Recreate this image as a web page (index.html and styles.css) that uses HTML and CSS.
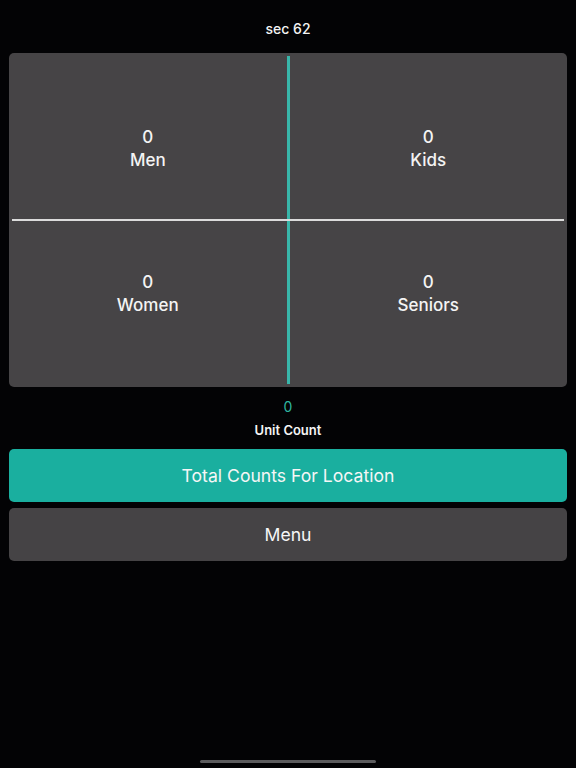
FILE: index.html
```html
<!DOCTYPE html>
<html>
<head>
<meta charset="utf-8">
<link rel="stylesheet" href="styles.css">
</head>
<body>
<div class="screen">
  <div class="title">sec 62</div>
  <div class="panel">
    <div class="grid">
      <div class="cell top left"><span class="num">0</span><span class="lbl">Men</span></div>
      <div class="vline"></div>
      <div class="cell top right"><span class="num">0</span><span class="lbl">Kids</span></div>
      <div class="hline"></div>
      <div class="cell bottom left"><span class="num">0</span><span class="lbl">Women</span></div>
      <div class="vline"></div>
      <div class="cell bottom right"><span class="num">0</span><span class="lbl">Seniors</span></div>
    </div>
  </div>
  <div class="unit">
    <span class="unit-num">0</span>
    <span class="unit-lbl">Unit Count</span>
  </div>
  <div class="btn teal">Total Counts For Location</div>
  <div class="btn gray">Menu</div>
</div>
<div class="home"></div>
</body>
</html>
```
FILE: styles.css
```css
html, body {
  margin: 0;
  padding: 0;
  background: #030305;
  height: 768px;
  overflow: hidden;
  font-family: Inter, "Liberation Sans", sans-serif;
  color: #f4f4f4;
}
.screen {
  padding: 0 9px;
  display: flex;
  flex-direction: column;
}
.title {
  height: 53px;
  display: flex;
  align-items: center;
  justify-content: center;
  font-size: 14px;
  font-weight: 500;
  padding-top: 3px;
  box-sizing: border-box;
}
.panel {
  background: #464446;
  border-radius: 5px;
  padding: 3px;
  height: 334px;
  box-sizing: border-box;
}
.grid {
  display: grid;
  grid-template-columns: 1fr 3px 1fr;
  grid-template-rows: 163px 2px 163px;
  height: 100%;
}
.cell {
  display: flex;
  flex-direction: column;
  align-items: center;
  justify-content: center;
  font-size: 17px;
  font-weight: 550;
  line-height: 23px;
}
.cell.left { padding-right: 3px; }
.cell.right { padding-left: 3px; }
.cell.top { padding-top: 22px; }
.cell.bottom { padding-bottom: 18px; }
.vline { background: #38b6aa; }
.hline {
  grid-column: 1 / 4;
  background: #dcdcdc;
  height: 1.5px;
  align-self: center;
}
.unit {
  display: flex;
  flex-direction: column;
  align-items: center;
  padding-top: 12px;
  height: 62px;
  box-sizing: border-box;
}
.unit-num {
  color: #2fb5a0;
  font-size: 14px;
  line-height: 16px;
}
.unit-lbl {
  font-size: 13px;
  font-weight: 600;
  line-height: 16px;
  margin-top: 7px;
}
.btn {
  height: 53px;
  border-radius: 5px;
  display: flex;
  align-items: center;
  justify-content: center;
  font-size: 17.6px;
  color: #f6f6f6;
}
.teal { background: #1aaf9f; }
.gray { background: #454345; margin-top: 6px; }
.home {
  position: absolute;
  left: 200px;
  top: 760px;
  width: 176px;
  height: 3px;
  border-radius: 2px;
  background: #5c5c5e;
}
```
